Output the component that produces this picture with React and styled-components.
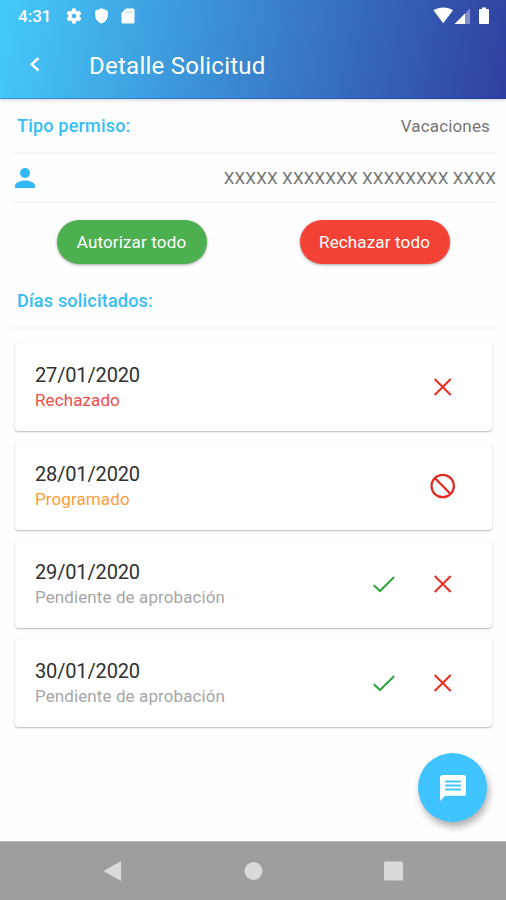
import React from 'react';
import styled, { createGlobalStyle } from 'styled-components';

const GlobalStyle = createGlobalStyle`
  * {
    box-sizing: border-box;
  }

  body {
    margin: 0;
    background-color: #fefefe;
    font-family: Roboto, sans-serif;
  }
`;

const days = [
  { date: '27/01/2020', status: 'Rechazado', color: '#f44b46', actions: ['reject'] },
  { date: '28/01/2020', status: 'Programado', color: '#ff9c3a', actions: ['block'] },
  { date: '29/01/2020', status: 'Pendiente de aprobación', color: '#a6a6a6', actions: ['approve', 'reject'] },
  { date: '30/01/2020', status: 'Pendiente de aprobación', color: '#a6a6a6', actions: ['approve', 'reject'] },
];

const StatusIcons = () => (
  <IconGroup>
    <svg width="18" height="18" viewBox="0 0 24 24" fill="#fff">
      <path d="M19.4 13c.1-.3.1-.7.1-1s0-.7-.1-1l2.1-1.6c.2-.2.2-.4.1-.6l-2-3.5c-.1-.2-.4-.3-.6-.2l-2.5 1c-.5-.4-1.1-.7-1.7-1l-.4-2.6c0-.3-.2-.5-.5-.5h-4c-.3 0-.5.2-.5.4l-.4 2.7c-.6.2-1.1.6-1.7 1l-2.5-1c-.2-.1-.5 0-.6.2l-2 3.5c-.1.2-.1.4.1.6L4.6 11c-.1.3-.1.7-.1 1s0 .7.1 1l-2.1 1.6c-.2.2-.2.4-.1.6l2 3.5c.1.2.4.3.6.2l2.5-1c.5.4 1.1.7 1.7 1l.4 2.6c0 .3.2.5.5.5h4c.3 0 .5-.2.5-.5l.4-2.6c.6-.3 1.2-.6 1.7-1l2.5 1c.2.1.5 0 .6-.2l2-3.5c.1-.2.1-.5-.1-.6zM12 15a3 3 0 1 1 0-6 3 3 0 0 1 0 6z" />
    </svg>
    <svg width="14" height="16" viewBox="0 0 14 16" fill="#fff">
      <path d="M6.5.3 12.800 2.700v4.600c0 3.900-2.600 7-6.300 8.200C2.800 14.300.2 11.200.2 7.300V2.700z" />
    </svg>
    <svg width="14" height="16" viewBox="0 0 14 16">
      <path fill="#fff" d="M5 .5h7A1.500 1.500 0 0 1 13.500 2v12a1.500 1.500 0 0 1-1.500 1.500H2A1.500 1.500 0 0 1 .5 14V5z" />
      <path stroke="#a9d8f3" strokeWidth="1.2" d="M5.500 3v2.500M8 3v2.500M10.500 3v2.500" />
    </svg>
  </IconGroup>
);

const SignalIcons = () => (
  <svg width="58" height="20" viewBox="0 0 58 20">
    <path fill="#fff" d="M.5 4.200C6.300.7 14.300.7 20 4.200L10.200 17.300z" />
    <path fill="#8291cc" d="M37 2.500V18h-5V7.500z" />
    <path fill="#fff" d="M32 7.500V18H21.500z" />
    <path fill="#fff" d="M49 1.500h4V3h2a1 1 0 0 1 1 1v13a1 1 0 0 1-1 1h-8a1 1 0 0 1-1-1V4a1 1 0 0 1 1-1h2z" />
  </svg>
);

const ActionIcon = ({ type }) => {
  if (type === 'approve') {
    return (
      <svg width="28" height="28" viewBox="0 0 28 28" fill="none" stroke="#2fa53a" strokeWidth="2">
        <path d="M3.700 15.200 10 21 24.200 7" />
      </svg>
    );
  }
  if (type === 'block') {
    return (
      <svg width="28" height="28" viewBox="0 0 28 28" fill="none" stroke="#e5281f" strokeWidth="2.2">
        <circle cx="13.700" cy="14" r="11.200" />
        <path d="m5.800 6 15.800 16" />
      </svg>
    );
  }
  return (
    <svg width="28" height="28" viewBox="0 0 28 28" fill="none" stroke="#e92c24" strokeWidth="2">
      <path d="m5.700 6 16 16M21.700 6l-16 16" />
    </svg>
  );
};

const App = () => {
  return (
    <Screen>
      <GlobalStyle />
      <Header>
        <StatusBar>
          <Clock>4:31</Clock>
          <StatusIcons />
          <SignalIcons />
        </StatusBar>
        <Toolbar>
          <svg width="12" height="18" viewBox="0 0 12 18" fill="none" stroke="#fff" strokeWidth="2.6">
            <path d="M9.500 2 2.700 8.300l6.800 6.300" />
          </svg>
          <Title>Detalle Solicitud</Title>
        </Toolbar>
      </Header>

      <Content>
        <InfoRow $height={55}>
          <Label>Tipo permiso:</Label>
          <PermitType>Vacaciones</PermitType>
        </InfoRow>
        <InfoRow $height={49}>
          <svg width="20" height="20" viewBox="0 0 20 20" fill="#32b9f5">
            <circle cx="10" cy="5" r="5" />
            <path d="M0 20v-2.500C0 14.200 6.700 12.500 10 12.500s10 1.700 10 5V20z" />
          </svg>
          <Person>XXXXX XXXXXXX XXXXXXXX XXXX</Person>
        </InfoRow>

        <ButtonRow>
          <PillButton $color="#4caf50">Autorizar todo</PillButton>
          <PillButton $color="#f44336">Rechazar todo</PillButton>
        </ButtonRow>

        <InfoRow $height={56}>
          <Label>Días solicitados:</Label>
        </InfoRow>

        <DayList>
          {days.map((day) => (
            <DayCard key={day.date}>
              <div>
                <DayDate>{day.date}</DayDate>
                <DayStatus $color={day.color}>{day.status}</DayStatus>
              </div>
              <Actions>
                {day.actions.map((type) => (
                  <ActionIcon key={type} type={type} />
                ))}
              </Actions>
            </DayCard>
          ))}
        </DayList>

        <Fab aria-label="Comentarios">
          <svg width="26" height="26" viewBox="0 0 26 26">
            <path fill="#fff" d="M2.600 0h20.800A2.600 2.600 0 0 1 26 2.600v15.600a2.600 2.600 0 0 1-2.600 2.600H5.200L0 26V2.600A2.600 2.600 0 0 1 2.600 0z" />
            <path stroke="#40c4ff" strokeWidth="2" d="M5.200 6.500h15.600M5.200 10.500h15.600M5.200 14.500h15.600" />
          </svg>
        </Fab>
      </Content>

      <NavBar>
        <svg width="20" height="22" viewBox="0 0 20 22">
          <path fill="#dadada" d="M18 1v20L.5 11z" />
        </svg>
        <svg width="20" height="20" viewBox="0 0 20 20">
          <circle cx="10.500" cy="10" r="9" fill="#dadada" />
        </svg>
        <svg width="20" height="20" viewBox="0 0 20 20">
          <rect x="1" y=".5" width="19" height="19" rx="1.500" fill="#dadada" />
        </svg>
      </NavBar>
    </Screen>
  );
};

const Screen = styled.div`
  display: flex;
  flex-direction: column;
  width: 506px;
  height: 900px;
  overflow: hidden;
`;

const Header = styled.header`
  height: 99px;
  background: linear-gradient(100deg, #44cafc 0%, #303f9f 100%);
  border-bottom: 1px solid rgba(0, 30, 150, 0.3);
  box-shadow: 0 1px 4px rgba(0, 0, 0, 0.18);
  color: #fff;
`;

const StatusBar = styled.div`
  display: flex;
  align-items: center;
  height: 31px;
  padding: 0 15px 0 18px;

  > svg {
    margin-left: auto;
  }
`;

const Clock = styled.span`
  width: 47px;
  font-size: 17px;
  font-weight: 500;
`;

const IconGroup = styled.div`
  display: flex;
  align-items: center;
  gap: 12px;
`;

const Toolbar = styled.div`
  display: flex;
  align-items: center;
  gap: 48px;
  height: 68px;
  padding: 0 29px;
`;

const Title = styled.h1`
  margin: 1px 0 0;
  font-size: 24px;
  font-weight: 400;
  letter-spacing: 0.25px;
`;

const Content = styled.main`
  position: relative;
  flex: 1;
  padding: 0 10px 0 12px;
`;

const InfoRow = styled.div`
  display: flex;
  align-items: center;
  justify-content: space-between;
  height: ${(props) => props.$height}px;
  padding-left: 3px;
  border-bottom: 2px solid #f7f7f7;
`;

const Label = styled.span`
  padding-left: 2px;
  color: #35bdf6;
  font-size: 18px;
  font-weight: 500;
  letter-spacing: 0.2px;
`;

const PermitType = styled.span`
  padding-right: 6px;
  color: #757575;
  font-size: 17px;
  letter-spacing: 0.15px;
`;

const Person = styled.span`
  color: #757575;
  font-size: 17px;
  letter-spacing: 0.14px;
`;

const ButtonRow = styled.div`
  display: flex;
  justify-content: space-between;
  padding: 17px 46px 9px 45px;
`;

const PillButton = styled.button`
  width: 150px;
  height: 44px;
  padding: 0 1px 0 0;
  border: none;
  border-radius: 22px;
  background-color: ${(props) => props.$color};
  box-shadow: 0 1px 3px rgba(0, 0, 0, 0.35);
  color: #fff;
  font-family: inherit;
  font-size: 17px;
  letter-spacing: 0.15px;
`;

const DayList = styled.div`
  display: flex;
  flex-direction: column;
  gap: 10.5px;
  padding: 14px 4px 0 3px;
`;

const DayCard = styled.div`
  display: flex;
  align-items: center;
  justify-content: space-between;
  height: 88px;
  padding: 0 35px 0 20px;
  border-radius: 4px;
  background-color: #fff;
  box-shadow: 0 1px 2px rgba(0, 0, 0, 0.28);
`;

const DayDate = styled.div`
  color: #303030;
  font-size: 20px;
  line-height: 26px;
  letter-spacing: -0.15px;
`;

const DayStatus = styled.div`
  color: ${(props) => props.$color};
  font-size: 17px;
  line-height: 24px;
  letter-spacing: 0.1px;
`;

const Actions = styled.div`
  display: flex;
  gap: 31px;
`;

const Fab = styled.button`
  position: absolute;
  right: 19px;
  bottom: 19px;
  display: flex;
  align-items: center;
  justify-content: center;
  width: 69px;
  height: 69px;
  padding: 0;
  border: none;
  border-radius: 50%;
  background-color: #40c4ff;
  box-shadow: 2px 5px 7px rgba(0, 0, 0, 0.3);
`;

const NavBar = styled.nav`
  display: flex;
  align-items: center;
  justify-content: space-between;
  height: 59px;
  padding: 0 103px;
  border-top: 1px solid #b8b8b8;
  background-color: #9e9e9e;
`;

export default App;
